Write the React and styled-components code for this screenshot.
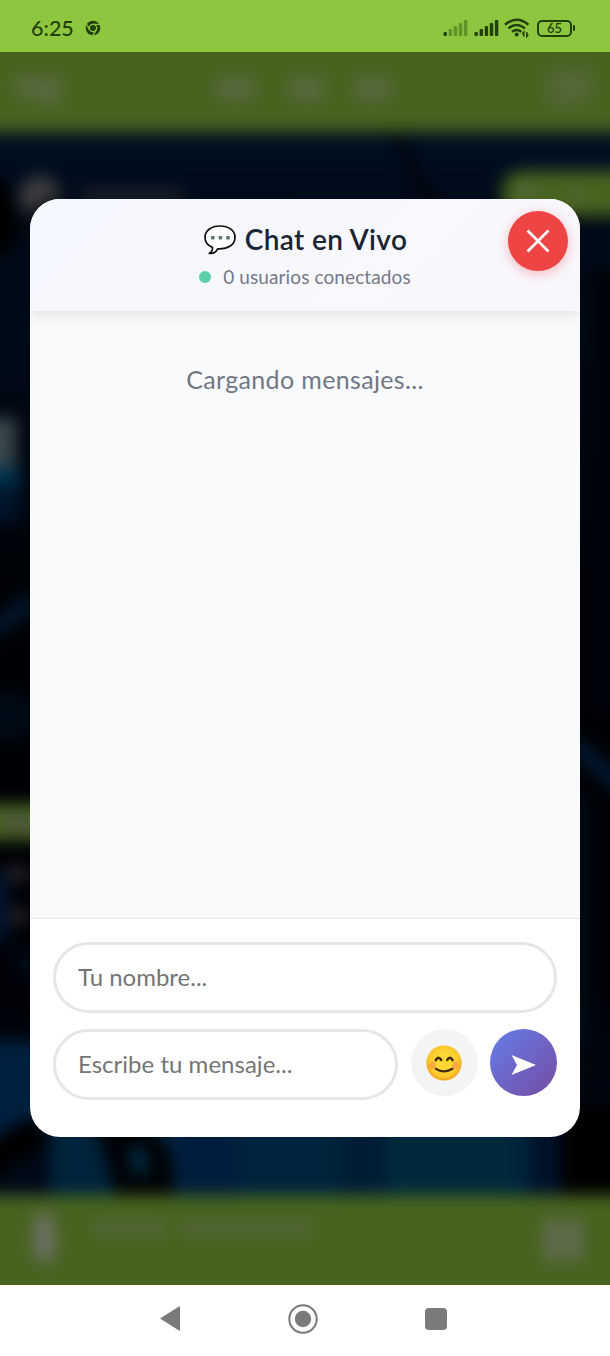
import styled, { createGlobalStyle } from "styled-components";

const GlobalStyle = createGlobalStyle`
  * { box-sizing: border-box; }
  body {
    margin: 0;
    font-family: Lato, "Noto Sans", sans-serif;
    overflow: hidden;
  }
`;

// phone signal with five bars, only the first "active" ones are solid
const Signal = ({ active }) => (
  <svg width="26" height="18" viewBox="0 0 26 18" fill="#21400b">
    {[4, 7, 10, 13, 16].map((h, i) => (
      <rect key={h} x={0.5 + i * 5.1} y={17 - h} width="3.4" height={h} rx="1" opacity={i < active ? 1 : 0.4} />
    ))}
  </svg>
);

const ChromeIcon = () => (
  <svg width="16" height="16" viewBox="0 0 16 16">
    <circle cx="8" cy="8" r="7.3" fill="#21400b" />
    <circle cx="8" cy="8" r="3.7" fill="none" stroke="#8dc63f" strokeWidth="1.3" />
    <path d="M8 4.3H14.8M4.8 9.9L1.4 4M11.2 9.9L7.9 15.4" stroke="#8dc63f" strokeWidth="1.3" />
  </svg>
);

const WifiIcon = () => (
  <svg width="26" height="20" viewBox="0 0 26 20" fill="none" stroke="#21400b" strokeWidth="2.5">
    <path d="M1 6.7Q12.7 -3.2 24.4 6.7" />
    <path d="M4.4 10.4Q12.7 3.5 21 10.4" />
    <path d="M8 13.8Q12.7 10.2 17.4 13.8" />
    <circle cx="12.7" cy="16.4" r="2" fill="#21400b" stroke="none" />
    <path d="M19.8 18.5V14.2L18.2 16M22.8 14V18.5L24.3 16.6" strokeWidth="1.5" />
  </svg>
);

const BalloonIcon = () => (
  <svg width="34" height="32" viewBox="0 0 34 32">
    <path
      d="M17 2C8 2 2 6.800 2 13.400C2 18 5 21.500 9.500 23.400C9.800 26 8.600 28 6.200 29.400C10.300 29.700 13.500 28 14.600 24.800C25 25.500 32 20.600 32 13.400C32 6.700 26 2 17 2Z"
      fill="#fff"
      stroke="#111"
      strokeWidth="1.7"
      strokeLinejoin="round"
    />
    <g fill="#5e7078">
      <rect x="8" y="12" width="3.600" height="3.600" rx="1" />
      <rect x="15.600" y="12" width="3.600" height="3.600" rx="1" />
      <rect x="23.200" y="12" width="3.600" height="3.600" rx="1" />
    </g>
  </svg>
);

const SmileIcon = () => (
  <svg width="36" height="36" viewBox="0 0 36 36">
    <defs>
      <radialGradient id="face" cx="50%" cy="45%" r="52%">
        <stop offset="0.4" stopColor="#fdd835" />
        <stop offset="0.85" stopColor="#fcc72b" />
        <stop offset="1" stopColor="#f2a61e" />
      </radialGradient>
    </defs>
    <circle cx="18" cy="18" r="17.600" fill="url(#face)" />
    <circle cx="6.200" cy="20.500" r="3.800" fill="#f98a4b" opacity="0.55" />
    <circle cx="29.800" cy="20.500" r="3.800" fill="#f98a4b" opacity="0.55" />
    <g fill="none" stroke="#422b0d" strokeLinecap="round">
      <path d="M9.800 15.200Q12.400 10.200 15.200 15M21.200 15Q23.800 10.200 26.600 15.200" strokeWidth="2.5" />
      <path d="M10 23.800Q18 29 26.400 23.800" strokeWidth="2.2" />
    </g>
  </svg>
);

// player page that sits behind the dialog
const Artwork = () => (
  <ArtSvg viewBox="-30 80 670 1063" preserveAspectRatio="none">
    <defs>
      <linearGradient id="night" x1="0" y1="0" x2="0" y2="1">
        <stop offset="0" stopColor="#002047" />
        <stop offset="0.08" stopColor="#00122d" />
        <stop offset="0.2" stopColor="#001430" />
        <stop offset="0.45" stopColor="#000308" />
        <stop offset="0.8" stopColor="#00030c" />
        <stop offset="1" stopColor="#001432" />
      </linearGradient>
    </defs>
    <rect x="-30" y="80" width="670" height="1063" fill="url(#night)" />
    <path d="M395 80L430 150" stroke="#000" strokeWidth="12" opacity="0.6" />
    <path d="M-30 115L6 130L18 160L12 200L-30 200Z" fill="#000" />
    <circle cx="40" cy="145" r="21" fill="#7c7c80" />
    <path d="M22 165L56 140V170Z" fill="#20242c" />
    <rect x="82" y="139" width="100" height="10" fill="#50525c" />
    <rect x="502" y="119" width="150" height="45" rx="20" fill="#8dc63f" />
    <circle cx="528" cy="141" r="7" fill="#c4d8b0" opacity="0.8" />
    <path d="M570 132L582 154" stroke="#c4d8b0" strokeWidth="5" opacity="0.7" />
    <rect x="590" y="220" width="50" height="440" fill="#000514" />
    <rect x="-30" y="366" width="46" height="56" fill="#728f98" />
    <rect x="-30" y="415" width="50" height="20" fill="#006499" />
    <rect x="-30" y="435" width="51" height="35" fill="#002854" />
    <path d="M-10 580L34 548" stroke="#002a50" strokeWidth="20" />
    <path d="M-30 664H32" stroke="#00152c" strokeWidth="45" />
    <rect x="-30" y="752" width="110" height="36" fill="#8dc63f" />
    <rect x="3" y="763" width="30" height="16" fill="#9daf85" />
    <path d="M4 822H29M2 864H29" stroke="#51494e" strokeWidth="14" />
    <path d="M-8 820V890" stroke="#00275a" strokeWidth="34" />
    <rect x="18" y="899" width="16" height="24" fill="#001b3d" />
    <path d="M572 692L630 740" stroke="#003468" strokeWidth="16" />
    <path d="M579 745V1000" stroke="#00172e" strokeWidth="20" />
    <path d="M-30 989H50V1070L-30 1100Z" fill="#004080" />
    <rect x="50" y="1070" width="480" height="90" fill="#00487a" />
    <rect x="176" y="1070" width="64" height="90" fill="#003b7c" />
    <rect x="340" y="1070" width="46" height="90" fill="#003b6a" />
    <rect x="390" y="1070" width="120" height="90" fill="#005578" />
    <path d="M-30 1122L40 1076" stroke="#000" strokeWidth="32" />
    <path d="M94 1070H145L170 1098L176 1150H118Z" fill="#00040b" />
    <ellipse cx="139" cy="1109" rx="8" ry="15" fill="#006598" transform="rotate(-12 138 1109)" />
    <path d="M530 1070H560V1143H530Z" fill="#002454" />
    <rect x="562" y="1050" width="80" height="93" fill="#000" />
  </ArtSvg>
);

const App = () => {
  return (
    <Screen>
      <GlobalStyle />

      <StatusBar>
        <Clock>6:25</Clock>
        <ChromeIcon />
        <StatusIcons>
          <Signal active={1} />
          <Signal active={5} />
          <WifiIcon />
          <Battery><Level>65</Level><Tip /></Battery>
        </StatusIcons>
      </StatusBar>

      <Stage>
        <Player aria-hidden="true">
          <PlayerBar $height={110}>
            <svg width="610" height="80" viewBox="0 0 610 80" fill="#dce5d4" opacity="0.42">
              <path d="M14 24H62V52H42L14 40Z" />
              <path d="M216 25H255V49H216ZM289 25H324V49H289ZM354 25H391V49H354Z" />
              <path d="M545 17H594V52H570L553 64V52H545Z" opacity="0.6" />
              <circle cx="574" cy="33" r="9" />
            </svg>
          </PlayerBar>
          <Artwork />
          <PlayerBar $height={120}>
            <svg width="610" height="110" viewBox="0 0 610 110" fill="#dfe4dc">
              <rect x="34" y="18" width="20" height="46" rx="9" opacity="0.9" />
              <path d="M30 45H59L46 76Z" opacity="0.55" />
              <path d="M93 24H166V40H93ZM180 25H313V40H180Z" opacity="0.3" />
              <path d="M545 24H560V66H545ZM566 24H581V66H566Z" opacity="0.72" />
            </svg>
          </PlayerBar>
        </Player>

        <Overlay>
          <Dialog>
            <ChatHeader>
              <Title><BalloonIcon /><TitleText>Chat en Vivo</TitleText></Title>
              <Online><Dot />0 usuarios conectados</Online>
              <CloseButton aria-label="Cerrar">
                <svg width="26" height="26" viewBox="0 0 26 26" fill="none" stroke="#fff" strokeWidth="2.700">
                  <path d="M2.500 2.500L23.500 23.500M23.500 2.500L2.500 23.500" />
                </svg>
              </CloseButton>
            </ChatHeader>

            <Messages>Cargando mensajes...</Messages>

            <ChatForm>
              <Field placeholder="Tu nombre..." $spacing="0" />
              <MessageRow>
                <Field placeholder="Escribe tu mensaje..." $spacing="0.02px" />
                <RoundButton aria-label="Emoji"><SmileIcon /></RoundButton>
                <RoundButton $primary aria-label="Enviar">
                  <svg width="26" height="22" viewBox="0 0 26 22" fill="#fff">
                    <path d="M0.500 1L25 11L0.500 21L6 11Z" />
                  </svg>
                </RoundButton>
              </MessageRow>
            </ChatForm>
          </Dialog>
        </Overlay>
      </Stage>

      <NavBar>
        <svg width="22" height="28" viewBox="0 0 22 28" fill="#7a7a7a"><path d="M1 13.500L20 1.500Q21 1 21 2V25Q21 26 20 25.500Z" /></svg>
        <svg width="30" height="30" viewBox="0 0 30 30">
          <circle cx="15" cy="15" r="13.700" fill="none" stroke="#7a7a7a" strokeWidth="2" />
          <circle cx="15" cy="15" r="8.200" fill="#7a7a7a" />
        </svg>
        <Square />
      </NavBar>
    </Screen>
  );
};

const Screen = styled.div`
  width: 610px;
  height: 1356px;
  display: flex;
  flex-direction: column;
`;

const StatusBar = styled.div`
  height: 52px;
  padding: 4px 35px 0 31px;
  display: flex;
  align-items: center;
  background: #8dc63f;
  color: #21400b;
`;

const Clock = styled.span`
  width: 54px;
  font-size: 21.5px;
  font-weight: 500;
`;

const StatusIcons = styled.div`
  margin-left: auto;
  display: flex;
  align-items: center;
  gap: 4.5px;
`;

const Battery = styled.div`
  display: flex;
  align-items: center;
  gap: 1px;
  margin-left: 2.5px;
`;

const Level = styled.div`
  width: 35px;
  height: 17px;
  border: 2px solid #21400b;
  border-radius: 5px;
  font-size: 13px;
  font-weight: 600;
  line-height: 13px;
  text-align: center;
`;

const Tip = styled.div`
  width: 2px;
  height: 6px;
  border-radius: 1px;
  background: #21400b;
`;

const Stage = styled.div`
  position: relative;
  height: 1233px;
  overflow: hidden;
  background: #8dc63f;
`;

// bleeds past the stage on every side so the blur has no visible edge
const Player = styled.div`
  margin: -30px -30px 0;
  display: flex;
  flex-direction: column;
  filter: blur(8px);
`;

const PlayerBar = styled.div`
  height: ${props => props.$height}px;
  flex: none;
  display: flex;
  justify-content: center;
  align-items: ${props => (props.$height > 110 ? "flex-start" : "flex-end")};
  background: #8dc63f;
`;

const ArtSvg = styled.svg`
  width: 100%;
  height: 1063px;
  flex: none;
  display: block;
`;

const Overlay = styled.div`
  position: absolute;
  inset: 0;
  padding: 147px 30px 148px;
  background: rgba(0, 0, 0, 0.5);
`;

const Dialog = styled.div`
  height: 938px;
  display: flex;
  flex-direction: column;
  border-radius: 30px;
  overflow: hidden;
  background: #fff;
`;

const ChatHeader = styled.div`
  position: relative;
  z-index: 1;
  height: 112px;
  padding-top: 25px;
  display: flex;
  flex-direction: column;
  align-items: center;
  background: linear-gradient(135deg, #f5f8fe, #f9f7fc);
  box-shadow: 0 3px 13px rgba(0, 0, 0, 0.1);
`;

const Title = styled.div`
  height: 32px;
  display: flex;
  align-items: center;
  gap: 8px;
  color: #1a2534;
  font-size: 28px;
  font-weight: 600;
  letter-spacing: 0.35px;
  white-space: nowrap;
`;

const TitleText = styled.span`
  padding-bottom: 3px;
`;

const Online = styled.div`
  height: 24px;
  margin-top: 8px;
  display: flex;
  align-items: center;
  color: #757887;
  font-size: 19px;
  letter-spacing: 0.1px;
  white-space: nowrap;
`;

const Dot = styled.span`
  width: 12px;
  height: 12px;
  margin: 2px 12px 0 0;
  border-radius: 50%;
  background: #5dd0a9;
`;

const CloseButton = styled.button`
  position: absolute;
  top: 12px;
  right: 12px;
  width: 60px;
  height: 60px;
  padding: 0;
  display: flex;
  align-items: center;
  justify-content: center;
  border: none;
  border-radius: 50%;
  background: #ef4444;
  box-shadow: 0 3px 12px rgba(239, 68, 68, 0.35);
`;

const Messages = styled.div`
  height: 607px;
  padding-top: 52px;
  background: #f9fafc;
  color: #717783;
  font-size: 25px;
  line-height: 32px;
  letter-spacing: 0.35px;
  text-align: center;
`;

const ChatForm = styled.div`
  flex: 1;
  padding: 23px 23px 0 23px;
  display: flex;
  flex-direction: column;
  gap: 16px;
  border-top: 1px solid #e4e6ea;
`;

const MessageRow = styled.div`
  display: flex;
  gap: 12.5px;
`;

const Field = styled.input`
  flex: 1 1 auto;
  min-width: 0;
  min-height: 71px;
  max-height: 71px;
  padding: 0 22px 3px;
  border: 3px solid #e5e6e9;
  border-radius: 36px;
  background: #fff;
  font-family: Lato, "Noto Sans", sans-serif;
  font-size: 24px;
  letter-spacing: ${props => props.$spacing};
  outline: none;

  &::placeholder {
    color: #757575;
    opacity: 1;
  }
`;

const RoundButton = styled.button`
  flex: none;
  width: 67px;
  height: 67px;
  padding: ${props => (props.$primary ? "5px 0 0" : "1px 1px 0 0")};
  display: flex;
  align-items: center;
  justify-content: center;
  border: none;
  border-radius: 50%;
  background: ${props => (props.$primary ? "linear-gradient(135deg, #667eea, #764ba2)" : "#f3f4f6")};
`;

const NavBar = styled.div`
  height: 71px;
  padding: 0 163px 4px 159px;
  display: flex;
  align-items: center;
  justify-content: space-between;
  background: #fff;
`;

const Square = styled.div`
  width: 22px;
  height: 22px;
  border-radius: 4px;
  background: #7a7a7a;
`;

export default App;
